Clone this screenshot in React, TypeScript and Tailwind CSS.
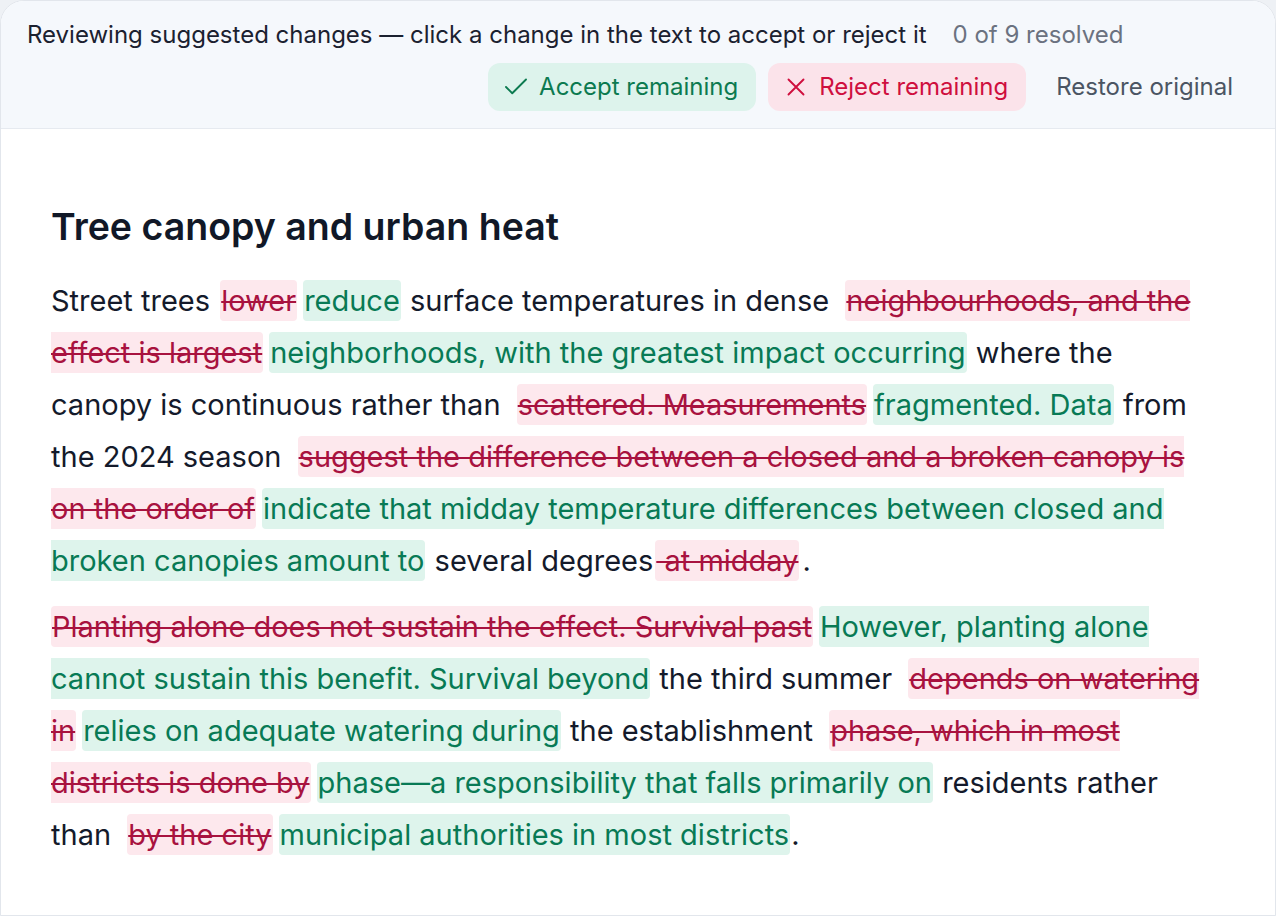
import React from 'react'

type Seg =
  | { t: 'txt'; s: string }
  | { t: 'del'; s: string; wide?: boolean; first?: boolean }
  | { t: 'ins'; s: string }

const p1: Seg[] = [
  { t: 'txt', s: 'Street trees ' },
  { t: 'del', s: 'lower' },
  { t: 'ins', s: 'reduce' },
  { t: 'txt', s: ' surface temperatures in dense ' },
  { t: 'del', s: 'neighbourhoods, and the effect is largest', wide: true },
  { t: 'ins', s: 'neighborhoods, with the greatest impact occurring' },
  { t: 'txt', s: ' where the canopy is continuous rather than ' },
  { t: 'del', s: 'scattered. Measurements', wide: true },
  { t: 'ins', s: 'fragmented. Data' },
  { t: 'txt', s: ' from the 2024 season ' },
  { t: 'del', s: 'suggest the difference between a closed and a broken canopy is on the order of', wide: true },
  { t: 'ins', s: 'indicate that midday temperature differences between closed and broken canopies amount to' },
  { t: 'txt', s: ' several degrees' },
  { t: 'del', s: ' at midday' },
  { t: 'txt', s: '.' },
]

const p2: Seg[] = [
  { t: 'del', s: 'Planting alone does not sustain the effect. Survival past', first: true },
  { t: 'ins', s: 'However, planting alone cannot sustain this benefit. Survival beyond' },
  { t: 'txt', s: ' the third summer ' },
  { t: 'del', s: 'depends on watering in', wide: true },
  { t: 'ins', s: 'relies on adequate watering during' },
  { t: 'txt', s: ' the establishment ' },
  { t: 'del', s: 'phase, which in most districts is done by', wide: true },
  { t: 'ins', s: 'phase—a responsibility that falls primarily on' },
  { t: 'txt', s: ' residents rather than ' },
  { t: 'del', s: 'by the city', wide: true },
  { t: 'ins', s: 'municipal authorities in most districts' },
  { t: 'txt', s: '.' },
]

function Para({ segs, className }: { segs: Seg[]; className?: string }) {
  return (
    <p className={className}>
      {segs.map((g, i) => {
        if (g.t === 'txt') return <React.Fragment key={i}>{g.s}</React.Fragment>
        if (g.t === 'del')
          return (
            <span
              key={i}
              className={`cursor-pointer rounded-[4px] bg-[#fde8ed] px-[1px] py-[3px] text-[#a8123f] line-through decoration-[#a8123f] decoration-2 mr-[3px] ${g.first ? '' : g.wide ? 'ml-[8px]' : 'ml-[2px]'}`}
            >
              {g.s}
            </span>
          )
        return (
          <span
            key={i}
            className="ml-[3px] mr-[1px] cursor-pointer rounded-[4px] bg-[#def4ec] px-[1px] py-[3px] text-[#087a55]"
          >
            {g.s}
          </span>
        )
      })}
    </p>
  )
}

export default function App() {
  return (
    <div className="min-h-screen bg-[#eef1f5] font-['Inter','Liberation_Sans',sans-serif]">
      <div className="min-h-screen overflow-hidden rounded-t-[24px] border border-[#e2e6ec] bg-white">
        <div className="flex flex-wrap items-center gap-x-[26px] gap-y-[12px] border-b border-[#e6eaf0] bg-[#f5f8fc] pl-[26px] pr-[24px] pt-[18px] pb-[17px]">
          <span className="text-[24px] leading-[32px] text-[#1b2130]">
            Reviewing suggested changes — click a change in the text to accept or reject it
          </span>
          <span className="text-[24px] leading-[32px] text-[#6b7280]">0 of 9 resolved</span>
          <div className="ml-auto flex items-center gap-[12px]">
            <button className="flex h-[48px] items-center gap-[8px] rounded-[12px] bg-[#ddf3ec] pl-[13px] pr-[18px] text-[24px] text-[#0c7a50]">
              <svg width="30" height="30" viewBox="0 0 24 24" fill="none" stroke="currentColor" strokeWidth="1.5" strokeLinecap="round" strokeLinejoin="round">
                <path d="M20 6 9 17l-5-5" />
              </svg>
              Accept remaining
            </button>
            <button className="flex h-[48px] items-center gap-[8px] rounded-[12px] bg-[#fbe3ea] pl-[13px] pr-[18px] text-[24px] text-[#cf0f3e]">
              <svg width="30" height="30" viewBox="0 0 24 24" fill="none" stroke="currentColor" strokeWidth="1.5" strokeLinecap="round" strokeLinejoin="round">
                <path d="M18 6 6 18M6 6l12 12" />
              </svg>
              Reject remaining
            </button>
            <button className="flex h-[48px] items-center rounded-[12px] px-[18px] text-[24px] text-[#4b5563]">
              Restore original
            </button>
          </div>
        </div>

        <div className="pl-[50px] pt-[76px]">
          <div className="w-[1162px]">
            <h1 className="mb-[26px] text-[37.5px] font-semibold leading-[44px] text-[#111827]">
              Tree canopy and urban heat
            </h1>
            <Para segs={p1} className="text-[29px] leading-[52px] text-[#141a2b]" />
            <Para segs={p2} className="mt-[14px] text-[29px] leading-[52px] text-[#141a2b]" />
          </div>
        </div>
      </div>
    </div>
  )
}
